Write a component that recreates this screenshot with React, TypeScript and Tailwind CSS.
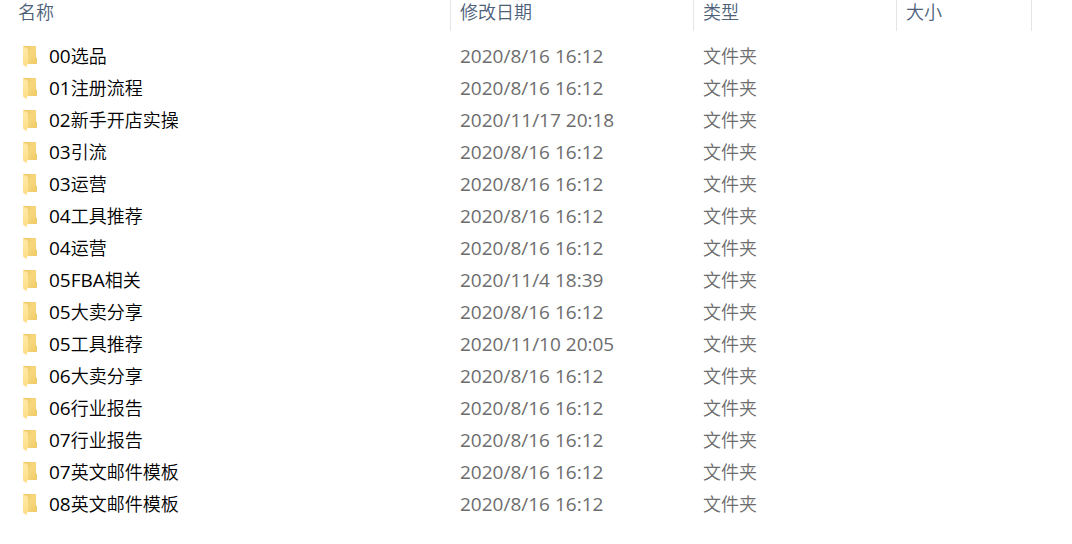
type Entry = { prefix: string; title: string; modified: string };

const entries: Entry[] = [
  { prefix: "00", title: "选品", modified: "2020/8/16 16:12" },
  { prefix: "01", title: "注册流程", modified: "2020/8/16 16:12" },
  { prefix: "02", title: "新手开店实操", modified: "2020/11/17 20:18" },
  { prefix: "03", title: "引流", modified: "2020/8/16 16:12" },
  { prefix: "03", title: "运营", modified: "2020/8/16 16:12" },
  { prefix: "04", title: "工具推荐", modified: "2020/8/16 16:12" },
  { prefix: "04", title: "运营", modified: "2020/8/16 16:12" },
  { prefix: "05FBA", title: "相关", modified: "2020/11/4 18:39" },
  { prefix: "05", title: "大卖分享", modified: "2020/8/16 16:12" },
  { prefix: "05", title: "工具推荐", modified: "2020/11/10 20:05" },
  { prefix: "06", title: "大卖分享", modified: "2020/8/16 16:12" },
  { prefix: "06", title: "行业报告", modified: "2020/8/16 16:12" },
  { prefix: "07", title: "行业报告", modified: "2020/8/16 16:12" },
  { prefix: "07", title: "英文邮件模板", modified: "2020/8/16 16:12" },
  { prefix: "08", title: "英文邮件模板", modified: "2020/8/16 16:12" },
];

function FolderGradients() {
  return (
    <svg className="absolute size-0" aria-hidden="true">
      <defs>
        <linearGradient id="folder-back" x1="0" y1="0" x2="1" y2="1">
          <stop offset="0" stopColor="#e9c765" />
          <stop offset="0.5" stopColor="#f7d87e" />
          <stop offset="1" stopColor="#efca65" />
        </linearGradient>
        <linearGradient id="folder-flap" x1="0" y1="0" x2="0" y2="1">
          <stop offset="0" stopColor="#ffe9a6" />
          <stop offset="1" stopColor="#ffde88" />
        </linearGradient>
      </defs>
    </svg>
  );
}

function FolderIcon() {
  return (
    <svg viewBox="0 -2 16 24" className="h-6 w-4 shrink-0" aria-hidden="true">
      <path d="M1 0H14V11.4L15 12V18H4L1 17Z" fill="url(#folder-back)" />
      <path d="M1 0.2L5.2 2.6Q6 3 6 4V17.4L5 18V21.2L1 18.8Z" fill="url(#folder-flap)" />
    </svg>
  );
}

export default function App() {
  return (
    <main className="min-h-screen overflow-x-auto bg-white font-['Open_Sans','Noto_Sans_CJK_SC',sans-serif] font-[350] text-[#6d6d6d]">
      <FolderGradients />
      <table className="w-full table-fixed border-separate border-spacing-0 text-left whitespace-nowrap">
        <colgroup>
          <col className="w-[451px]" />
          <col className="w-[243px]" />
          <col className="w-[203px]" />
          <col className="w-[135px]" />
          <col />
        </colgroup>
        <thead className="text-lg/6 text-[#4c607a]">
          <tr className="h-[31px] align-top">
            <th scope="col" className="border-r border-[#e5e5e5] p-0 pl-[18px] font-[350]">名称</th>
            <th scope="col" className="border-r border-[#e5e5e5] p-0 pl-[9px] font-[350]">修改日期</th>
            <th scope="col" className="border-r border-[#e5e5e5] p-0 pl-[9px] font-[350]">类型</th>
            <th scope="col" className="border-r border-[#e5e5e5] p-0 pl-[9px] font-[350]">大小</th>
            <td className="p-0" />
          </tr>
        </thead>
        <tbody className="text-lg/6 before:block before:h-[9px]">
          {entries.map(({ prefix, title, modified }) => (
            <tr key={prefix + title} className="h-8">
              <td className="p-0 pl-[22px] text-black">
                <div className="flex items-center gap-[11px]">
                  <FolderIcon />
                  <span>
                    <span className="text-[19px] font-normal">{prefix}</span>
                    {title}
                  </span>
                </div>
              </td>
              <td className="p-0 pl-[9px] text-[19px] font-normal">{modified}</td>
              <td className="p-0 pl-[9px]">文件夹</td>
              <td className="p-0" />
              <td className="p-0" />
            </tr>
          ))}
        </tbody>
      </table>
    </main>
  );
}
